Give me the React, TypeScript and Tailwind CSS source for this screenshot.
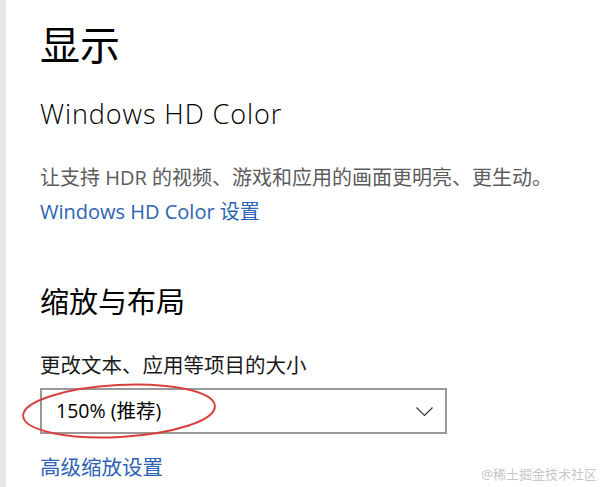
import React from 'react';

const sans = "font-['Open_Sans','Noto_Sans_CJK_SC',sans-serif]";

const App: React.FC = () => {
  return (
    <div className={`relative flex w-[600px] h-[487px] overflow-hidden bg-white text-black ${sans}`}>
      {/* left nav edge */}
      <div className="w-[6px] shrink-0 bg-[#e6e6e6]" />

      <div className="flex flex-col items-start pl-[34px]">
        <h1 className="mt-[21px] text-[40px] leading-[48px] font-normal">显示</h1>

        <h2 className="mt-[28px] text-[27px] leading-[33px] font-light tracking-[0.9px]">Windows HD Color</h2>
        <p className="mt-[34px] text-[20px] leading-[28px] text-[#5c5c5c]">
          让支持 HDR 的视频、游戏和应用的画面更明亮、更生动。
        </p>
        <a className="mt-[6px] text-[20px] leading-[28px] text-[#2d63b4]">Windows HD Color 设置</a>

        <h2 className="mt-[58px] text-[29px] leading-[36px] font-normal">缩放与布局</h2>
        <p className="mt-[31px] text-[20.5px] leading-[28px] text-[#1a1a1a]">更改文本、应用等项目的大小</p>

        {/* scale dropdown */}
        <div className="mt-[9px] flex h-[46px] w-[407px] items-center justify-between border-2 border-[#999999] pl-[14px] pr-[12px]">
          <span className="text-[19.5px] leading-none">150% (推荐)</span>
          <svg width="17" height="9" viewBox="0 0 17 9" fill="none">
            <polyline points="0.5,0.5 8.5,8.5 16.5,0.5" stroke="#333" strokeWidth="1.1" />
          </svg>
        </div>

        <a className="mt-[19px] text-[20.5px] leading-[28px] text-[#2d63b4]">高级缩放设置</a>
      </div>

      {/* red annotation */}
      <svg className="absolute left-[18px] top-[380px]" width="204" height="62" viewBox="0 0 204 62" fill="none">
        <ellipse cx="101" cy="31" rx="96" ry="26" stroke="#d8403e" strokeWidth="2" transform="rotate(-3 101 31)" />
      </svg>

      <span className="absolute right-[3px] bottom-[6px] text-[13px] leading-none text-[#c6c6c6]">@稀土掘金技术社区</span>
    </div>
  );
};

export default App;
